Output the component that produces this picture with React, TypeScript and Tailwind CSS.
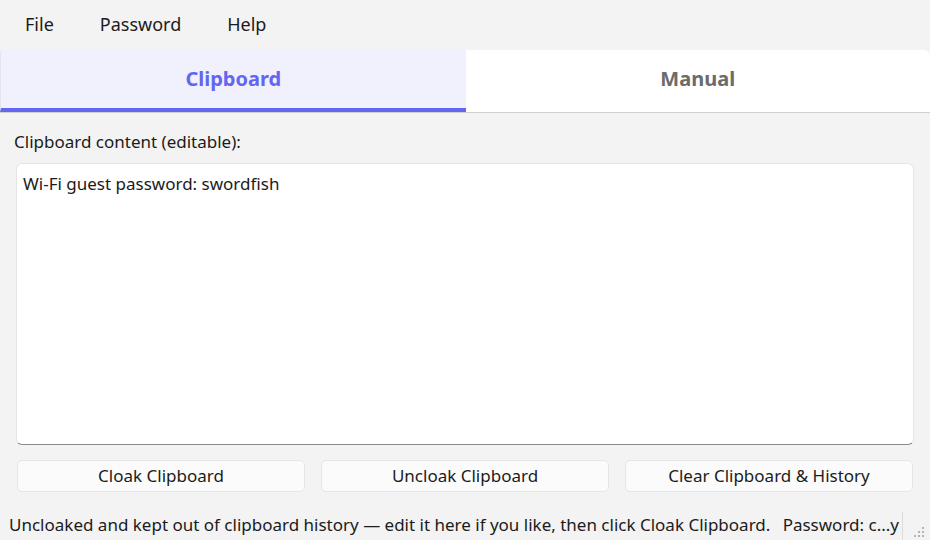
import { useState } from 'react'

const font = { fontFamily: '"Noto Sans", "Open Sans", sans-serif' }

export default function App() {
  const [tab, setTab] = useState<'clipboard' | 'manual'>('clipboard')
  const [text, setText] = useState('Wi-Fi guest password: swordfish')

  return (
    <div className="w-[930px] h-[540px] bg-[#f3f3f3] text-[#1b1b1b] flex flex-col overflow-hidden text-[17px]" style={font}>
      {/* menu bar */}
      <div className="h-[50px] flex items-center pl-[25px] gap-[46px] pb-[2px] text-[18px]">
        <span>File</span>
        <span>Password</span>
        <span>Help</span>
      </div>

      {/* tabs */}
      <div className="flex h-[63px] border-b border-[#d0d0d0]">
        <button
          onClick={() => setTab('clipboard')}
          className={`flex-1 rounded-tl-[4px] border-l font-bold text-[20px] border-b-4 ${
            tab === 'clipboard'
              ? 'bg-[#f1f1fd] text-[#6366f1] border-l-[#e4e4f0] border-b-[#6366f1]'
              : 'bg-white text-[#6b6b6b] border-l-transparent border-b-transparent'
          }`}
        >
          Clipboard
        </button>
        <button
          onClick={() => setTab('manual')}
          className={`flex-1 rounded-tr-[6px] font-bold text-[20px] border-b-4 ${
            tab === 'manual'
              ? 'bg-[#f1f1fd] text-[#6366f1] border-b-[#6366f1]'
              : 'bg-white text-[#6b6b6b] border-b-transparent'
          }`}
        >
          Manual
        </button>
      </div>

      {/* content */}
      <div className="flex-1 flex flex-col px-[14px] pt-[17px]">
        <label className="mb-[10px] leading-[23px]">Clipboard content (editable):</label>
        <textarea
          value={text}
          onChange={(e) => setText(e.target.value)}
          className="mx-[2px] h-[282px] resize-none bg-white border border-[#e5e5e5] border-b-[#8a8a8a] rounded-[6px] px-[6px] pt-[8px] outline-none leading-[23px]"
        />
        <div className="grid grid-cols-3 gap-[16px] mt-[15px] px-[3px]">
          <button className="h-[32px] bg-[#fbfbfb] border border-[#e5e5e5] rounded-[5px]">Cloak Clipboard</button>
          <button className="h-[32px] bg-[#fbfbfb] border border-[#e5e5e5] rounded-[5px]">Uncloak Clipboard</button>
          <button className="h-[32px] bg-[#fbfbfb] border border-[#e5e5e5] rounded-[5px]">Clear Clipboard &amp; History</button>
        </div>
      </div>

      {/* status bar */}
      <div className="h-[30px] flex items-center pl-[9px] pr-[3px]">
        <span className="flex-1 whitespace-nowrap">
          Uncloaked and kept out of clipboard history — edit it here if you like, then click Cloak Clipboard.
        </span>
        <span className="pr-[3px] whitespace-nowrap">Password: c...y</span>
        <div className="w-px h-[28px] bg-[#dcdcdc] self-end" />
        <svg width="24" height="24" viewBox="0 0 24 24" className="self-end" fill="#b5b5b5">
          <rect x="19" y="11" width="2" height="2" />
          <rect x="15" y="15" width="2" height="2" />
          <rect x="19" y="15" width="2" height="2" />
          <rect x="11" y="19" width="2" height="2" />
          <rect x="15" y="19" width="2" height="2" />
          <rect x="19" y="19" width="2" height="2" />
        </svg>
      </div>
    </div>
  )
}
